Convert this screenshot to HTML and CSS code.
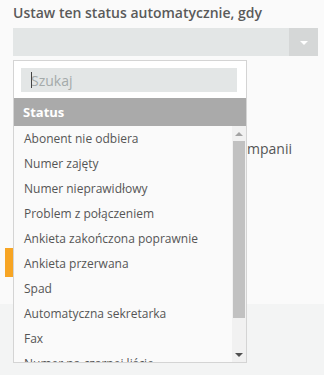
FILE: index.html
```html
<!DOCTYPE html>
<html lang="pl">
<head>
  <meta charset="UTF-8">
  <meta name="viewport" content="width=device-width, initial-scale=1.0">
  <title>Status</title>
  <link rel="stylesheet" href="styles.css">
</head>
<body>
  <div class="panel">
    <div class="field">
      <label class="field-label">Ustaw ten status automatycznie, gdy</label>
      <div class="select">
        <div class="select-value"></div>
        <div class="select-arrow"></div>
      </div>

      <div class="dropdown">
        <div class="dropdown-search">
          <div class="search-box">
            <input type="text" class="search-input" placeholder="Szukaj">
          </div>
        </div>
        <div class="dropdown-group">Status</div>
        <div class="dropdown-body">
          <ul class="options">
            <li>Abonent nie odbiera</li>
            <li>Numer zajęty</li>
            <li>Numer nieprawidłowy</li>
            <li>Problem z połączeniem</li>
            <li>Ankieta zakończona poprawnie</li>
            <li>Ankieta przerwana</li>
            <li>Spad</li>
            <li>Automatyczna sekretarka</li>
            <li>Fax</li>
            <li>Numer na czarnej liście</li>
          </ul>
          <div class="scrollbar">
            <div class="scroll-btn up"></div>
            <div class="scroll-track">
              <div class="scroll-thumb"></div>
            </div>
            <div class="scroll-btn down"></div>
          </div>
        </div>
      </div>
    </div>

    <div class="option-row">
      <label class="option-label">Ustaw ten status po zakończeniu kampanii</label>
    </div>

    <div class="switch-row">
      <div class="accent"></div>
    </div>
  </div>
  <div class="footer"></div>
</body>
</html>
```

FILE: styles.css
```css
* {
  margin: 0;
  padding: 0;
  box-sizing: border-box;
}

body {
  background: #fafafa;
  font-family: 'Open Sans', 'Noto Sans', sans-serif;
  color: #555;
  overflow: hidden;
  height: 375px;
}

.panel {
  height: 304px;
}

.field {
  position: relative;
  padding: 4px 6px 0 13px;
}

.field-label {
  display: block;
  font-size: 14px;
  font-weight: 600;
  line-height: 18px;
  color: #5a5a5a;
}

.select {
  display: flex;
  height: 28px;
  margin-top: 6px;
  background: #e3e6e6;
}

.select-value {
  flex: 1;
}

.select-arrow {
  width: 29px;
  background: #d5d7d7;
  display: flex;
  justify-content: center;
  align-items: center;
}

.select-arrow:after {
  content: '';
  border-left: 4px solid transparent;
  border-right: 4px solid transparent;
  border-top: 4px solid #fff;
  margin-top: 2px;
}

.option-row {
  padding: 81px 32px 0 13px;
  text-align: right;
  white-space: nowrap;
}

.option-label {
  font-size: 14px;
  line-height: 18px;
  color: #555;
}

.dropdown {
  position: absolute;
  top: 60px;
  left: 13px;
  width: 234px;
  height: 303px;
  background: #fafafa;
  border: 1px solid #d4d4d4;
  z-index: 2;
  display: flex;
  flex-direction: column;
  overflow: hidden;
}

.dropdown-search {
  background: #fff;
  padding: 7px 9px 6px 7px;
}

.search-box {
  position: relative;
}

/* blinking caret from the screenshot */
.search-box:before {
  content: '';
  position: absolute;
  left: 10px;
  top: 4px;
  width: 1px;
  height: 16px;
  background: #444;
}

.search-input {
  display: block;
  width: 100%;
  height: 24px;
  border: none;
  outline: none;
  background: #e3e6e6;
  font-family: inherit;
  font-size: 14px;
  padding: 0 0 0 10px;
  color: #555;
}

.search-input::placeholder {
  color: #a4aaaa;
}

.dropdown-group {
  background: #aaaaaa;
  color: #fff;
  font-weight: 700;
  font-size: 13px;
  height: 28px;
  line-height: 28px;
  padding-left: 9px;
}

.dropdown-body {
  flex: 1;
  display: flex;
  min-height: 0;
}

.options {
  flex: 1;
  list-style: none;
  overflow: hidden;
}

.options li {
  height: 25px;
  line-height: 25px;
  font-size: 12px;
  padding-left: 10px;
  color: #555;
  white-space: nowrap;
}

.scrollbar {
  width: 14px;
  background: #f1f1f1;
  display: flex;
  flex-direction: column;
}

.scroll-btn {
  height: 15px;
  display: flex;
  justify-content: center;
  align-items: center;
}

.scroll-btn.up:after {
  content: '';
  border-left: 4px solid transparent;
  border-right: 4px solid transparent;
  border-bottom: 4px solid #a3a3a3;
}

.scroll-btn.down:after {
  content: '';
  border-left: 4px solid transparent;
  border-right: 4px solid transparent;
  border-top: 4px solid #505050;
}

.scroll-track {
  flex: 1;
  padding: 0 1px;
}

.scroll-thumb {
  height: 177px;
  background: #c1c1c1;
}

.switch-row {
  padding-top: 89px;
  padding-left: 5px;
}

.accent {
  width: 8px;
  height: 29px;
  background: #f7a524;
}

.footer {
  height: 71px;
  background: #f3f4f4;
}
```
